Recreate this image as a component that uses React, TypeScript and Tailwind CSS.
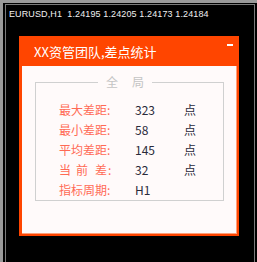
const rows = [
  { label: "最大差距:", value: "323", unit: "点" },
  { label: "最小差距:", value: "58", unit: "点" },
  { label: "平均差距:", value: "145", unit: "点" },
  { label: "当前差:", value: "32", unit: "点", spaced: true },
  { label: "指标周期:", value: "H1", unit: "" },
];

function Label({ text, spaced }: { text: string; spaced?: boolean }) {
  if (!spaced) return <span>{text}</span>;
  return (
    <span className="flex">
      <span className="mr-[5px]">当</span>
      <span className="mr-[7px]">前</span>
      <span className="mr-[1px]">差</span>
      <span>:</span>
    </span>
  );
}

export default function App() {
  return (
    <div className="w-[257px] h-[262px] bg-black border-t-[3px] border-l-[3px] border-[#9a9a9a] overflow-hidden font-['Noto_Sans_CJK_SC',sans-serif]">
      <div className="ml-[2px] mt-[1px] mr-[2px] h-full border-l border-t border-r border-[#7a7a7a]">
        <div className="pl-[3px] pt-[3px] text-[9px] leading-[12px] tracking-[0.12px] text-[#f0f0f0] whitespace-pre font-['Liberation_Sans',sans-serif]">
          EURUSD,H1  1.24195 1.24205 1.24173 1.24184
        </div>

        <div className="relative ml-[13px] mt-[16px] w-[220px] h-[200px] bg-[#ff4500] flex flex-col">
          <div className="h-[30px] flex items-center pl-[15px] text-white text-[13px] leading-none">
            XX资管团队,差点统计
          </div>
          <div className="absolute right-[6px] top-[8px] w-[6px] h-[2px] bg-white" />

          <div className="ml-[3px] mr-[2px] mb-[2px] flex-1 bg-[#fffafa] border-r border-b border-[#ffa07a] pt-[16px] pl-[13px]">
            <div className="relative w-[189px] h-[119px] border border-[#d0d0d0]">
              <div className="absolute left-[62px] top-[-8px] w-[54px] h-[14px] bg-[#fffafa] flex items-center justify-center gap-[14px] text-[12px] leading-none text-[#c4c4c4]">
                <span>全</span>
                <span>局</span>
              </div>

              <div className="pt-[17px] pl-[23px] text-[12px] leading-none">
                {rows.map((r) => (
                  <div key={r.label} className="h-[20px] flex items-center">
                    <div className="w-[76px] text-[#ff6a55]">
                      <Label text={r.label} spaced={r.spaced} />
                    </div>
                    <div className="w-[49px] text-[#2a2a3a]">{r.value}</div>
                    <div className="text-[#2a2a3a]">{r.unit}</div>
                  </div>
                ))}
              </div>
            </div>
          </div>
        </div>
      </div>
    </div>
  );
}
